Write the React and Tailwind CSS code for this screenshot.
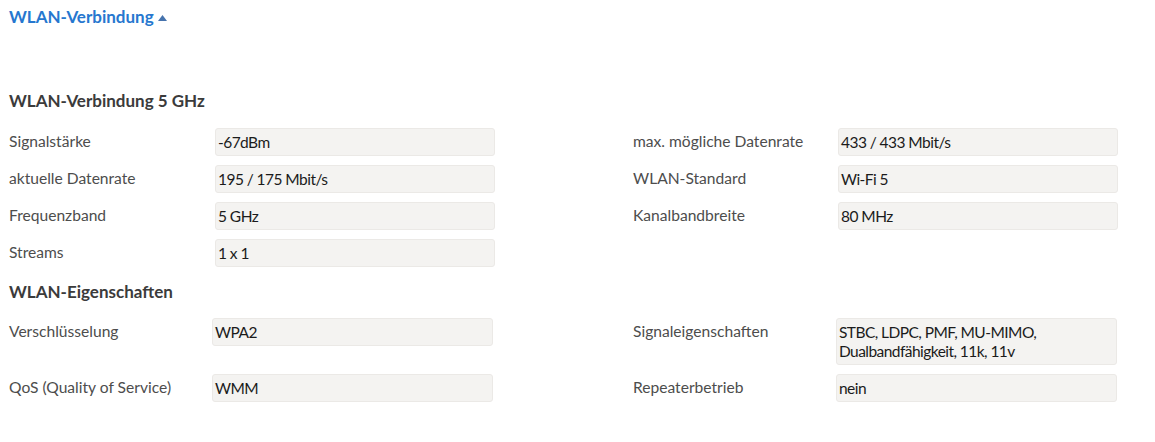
import React from "react";

const font = { fontFamily: '"Source Sans Pro", Lato, "Noto Sans", sans-serif' };

function Box({ children, className = "" }) {
  return (
    <div
      className={`min-h-[28px] w-[280px] rounded-[3px] border border-[#ebe9e6] bg-[#f4f3f1] pl-[2px] py-[3.5px] text-[15.5px] leading-[19px] tracking-[-0.55px] text-[#1b1b1b] ${className}`}
    >
      {children}
    </div>
  );
}

function Field({ label, value, labelW, boxClass = "" }) {
  return (
    <div className="flex items-start">
      <div className={`${labelW} pt-[3px] text-[15.6px] leading-[20px] text-[#4d4d4d]`}>{label}</div>
      <Box className={boxClass}>{value}</Box>
    </div>
  );
}

function Row({ left, right, second }) {
  const lw = second ? "w-[203px]" : "w-[206px]";
  const rw = second ? "w-[203px]" : "w-[205px]";
  return (
    <div className="flex items-start">
      <div className="w-[624px]">
        {left && <Field label={left[0]} value={left[1]} labelW={lw} boxClass={second ? "w-[281px]" : ""} />}
      </div>
      <div>{right && <Field label={right[0]} value={right[1]} labelW={rw} boxClass={second ? "w-[281px]" : ""} />}</div>
    </div>
  );
}

export default function App() {
  return (
    <div className="min-h-[442px] w-[1155px] bg-white pl-[9px]" style={font}>
      <div className="flex items-center pt-[6px] h-[28px]">
        <span className="text-[17px] font-bold leading-[22px] text-[#2677cf]">WLAN-Verbindung</span>
        <svg width="9" height="6" viewBox="0 0 9 6" className="ml-[4px] mt-[1px]">
          <polygon points="4.5,0 9,6 0,6" fill="#4673ad" />
        </svg>
      </div>
      <h2 className="mt-[62px] text-[17px] font-bold leading-[22px] text-[#3b3b3b]">WLAN-Verbindung 5 GHz</h2>
      <div className="mt-[16px] flex flex-col gap-[9px]">
        <Row left={["Signalstärke", "-67dBm"]} right={["max. mögliche Datenrate", "433 / 433 Mbit/s"]} />
        <Row left={["aktuelle Datenrate", "195 / 175 Mbit/s"]} right={["WLAN-Standard", "Wi-Fi 5"]} />
        <Row left={["Frequenzband", "5 GHz"]} right={["Kanalbandbreite", "80 MHz"]} />
        <Row left={["Streams", "1 x 1"]} />
      </div>
      <h2 className="mt-[14px] text-[17px] font-bold leading-[22px] text-[#3b3b3b]">WLAN-Eigenschaften</h2>
      <div className="mt-[15px] flex flex-col gap-[9px]">
        <Row
          second
          left={["Verschlüsselung", "WPA2"]}
          right={[
            "Signaleigenschaften",
            <>
              STBC, LDPC, PMF, MU-MIMO,
              <br />
              Dualbandfähigkeit, 11k, 11v
            </>,
          ]}
        />
        <Row second left={["QoS (Quality of Service)", "WMM"]} right={["Repeaterbetrieb", "nein"]} />
      </div>
    </div>
  );
}
